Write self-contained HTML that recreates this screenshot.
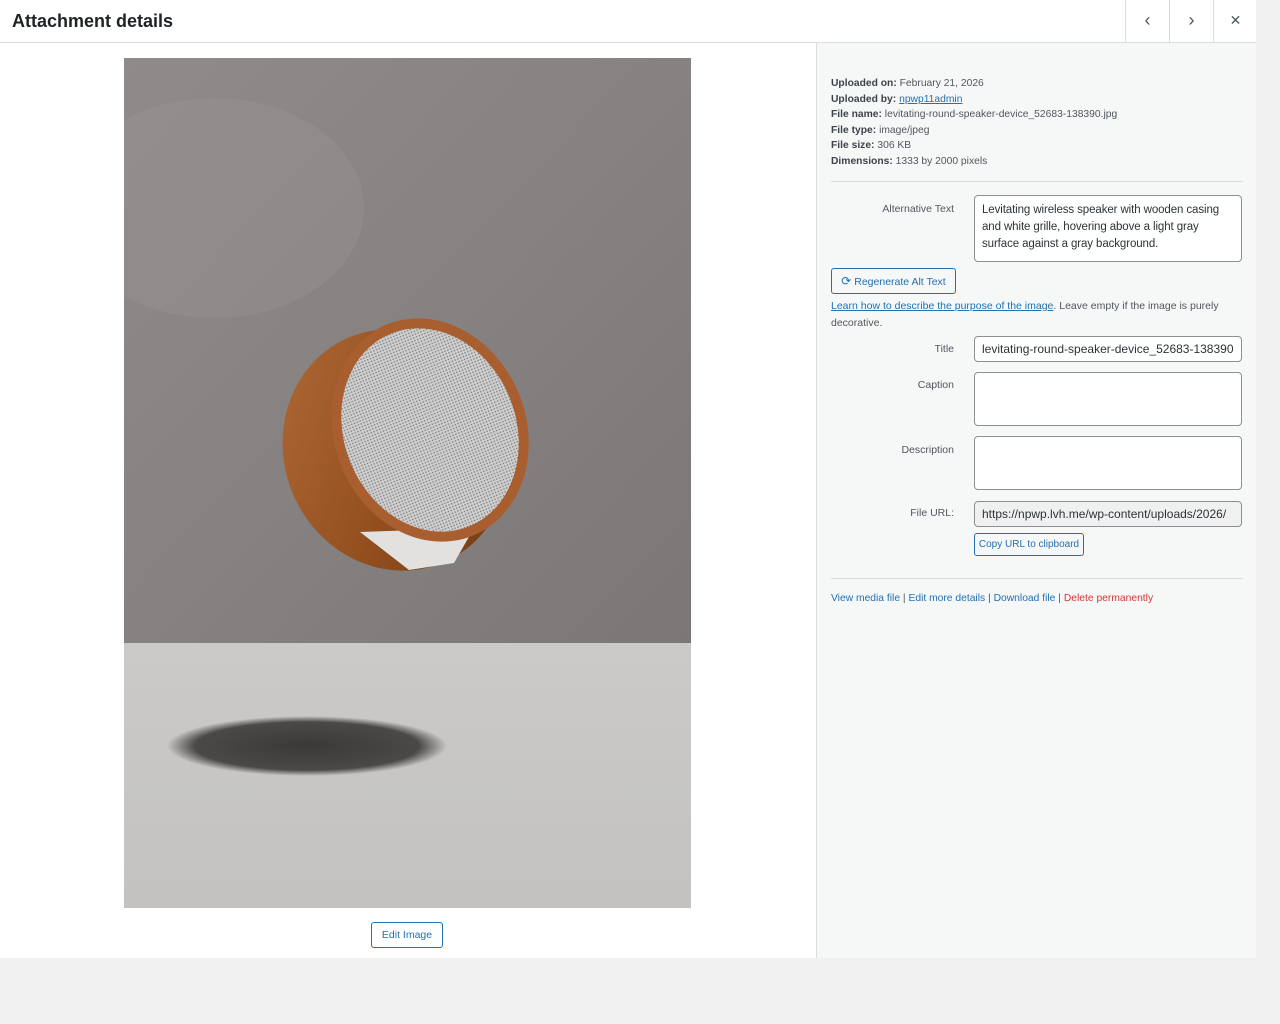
<!DOCTYPE html>
<html><head><meta charset="utf-8"><style>
*{box-sizing:border-box;margin:0;padding:0}
body{width:1280px;height:1024px;background:#f0f0f1;font-family:"Liberation Sans",sans-serif;color:#3c434a;position:relative;overflow:hidden}
.modal{position:absolute;left:0;top:0;width:1256px;height:958px;background:#fff}
.hdr{position:absolute;left:0;top:0;width:1256px;height:43px;border-bottom:1px solid #dcdcde;background:#fff}
.hdr h1{position:absolute;left:12px;top:11px;font-size:18px;font-weight:600;color:#1d2327}
.nb{position:absolute;top:0;width:44px;height:42px;border-left:1px solid #dcdcde;color:#50575e;font-size:18px;text-align:center;line-height:40px}
.side{position:absolute;left:816px;top:43px;width:440px;height:915px;background:#f6f7f7;border-left:1px solid #dcdcde}
.meta{position:absolute;left:14px;top:33px;font-size:10.3px;line-height:15.6px;color:#50575e}
.meta b{color:#3c434a}
a{color:#2271b1}
.hr{position:absolute;left:14px;width:412px;height:1px;background:#dcdcde}
.lbl{position:absolute;right:302px;font-size:10.5px;color:#50575e;text-align:right}
.fld{position:absolute;left:157px;width:268px;background:#fff;border:1px solid #8c8f94;border-radius:4px;font-size:12px;color:#2c3338;padding:6px 7px;line-height:17px;white-space:nowrap;overflow:hidden}
.btn{position:absolute;border:1px solid #2271b1;border-radius:3px;color:#2271b1;font-size:10.5px;background:#f6f7f7;text-align:center}
</style></head><body>
<div class="modal">
<div class="hdr"><h1>Attachment details</h1>
<div class="nb" style="left:1125px">&#8249;</div>
<div class="nb" style="left:1169px">&#8250;</div>
<div class="nb" style="left:1213px;font-size:14px">&#10005;</div>
</div>
<svg style="position:absolute;left:124px;top:58px" width="567" height="850" viewBox="0 0 567 850">
<defs>
<linearGradient id="wall" x1="0" y1="0" x2="1" y2="1"><stop offset="0" stop-color="#8f8b8a"/><stop offset=".5" stop-color="#868281"/><stop offset="1" stop-color="#7b7776"/></linearGradient>
<linearGradient id="floor" x1="0" y1="0" x2="0" y2="1"><stop offset="0" stop-color="#cbcac8"/><stop offset="1" stop-color="#c3c2c0"/></linearGradient>
<linearGradient id="wood" x1="0" y1="0" x2="1" y2="1"><stop offset="0" stop-color="#b06a38"/><stop offset=".5" stop-color="#94501f"/><stop offset="1" stop-color="#6e3814"/></linearGradient>
<pattern id="mesh" width="3" height="3" patternUnits="userSpaceOnUse"><rect width="3" height="3" fill="#cfcfcf"/><circle cx="1.5" cy="1.5" r=".8" fill="#7a7a7a"/></pattern>
<radialGradient id="sh"><stop offset="0" stop-color="#3a3938"/><stop offset=".8" stop-color="#4a4948"/><stop offset="1" stop-color="#4a4948" stop-opacity="0"/></radialGradient>
</defs>
<rect width="567" height="588" fill="url(#wall)"/>
<ellipse cx="90" cy="150" rx="150" ry="110" fill="#9a9695" opacity=".35"/>
<rect y="585" width="567" height="265" fill="url(#floor)"/>
<ellipse cx="183" cy="688" rx="140" ry="30" fill="url(#sh)"/>
<ellipse cx="272" cy="392" rx="112" ry="122" fill="url(#wood)" transform="rotate(-22 272 392)"/>
<polygon points="236,474 350,470 330,505 285,512" fill="#e2e1df"/>
<ellipse cx="306" cy="372" rx="96" ry="114" fill="#a85e2e" transform="rotate(-22 306 372)"/>
<ellipse cx="306" cy="372" rx="86" ry="104" fill="url(#mesh)" transform="rotate(-22 306 372)"/>
</svg>
<div class="btn" style="left:371px;top:922px;width:72px;height:26px;line-height:24px;background:#fff">Edit Image</div>
<div class="side">
<div class="meta"><b>Uploaded on:</b> February 21, 2026<br><b>Uploaded by:</b> <a href="#">npwp11admin</a><br><b>File name:</b> levitating-round-speaker-device_52683-138390.jpg<br><b>File type:</b> image/jpeg<br><b>File size:</b> 306 KB<br><b>Dimensions:</b> 1333 by 2000 pixels</div>
<div class="hr" style="top:138px"></div>
<div class="lbl" style="top:160px">Alternative Text</div>
<div class="fld" style="top:152px;height:67px;white-space:normal;line-height:17px;font-size:11.5px;letter-spacing:-0.1px">Levitating wireless speaker with wooden casing and white grille, hovering above a light gray surface against a gray background.</div>
<div class="btn" style="left:14px;top:225px;width:125px;height:26px;line-height:24px"><span style="font-size:12px">&#10227;</span> Regenerate Alt Text</div>
<div style="position:absolute;left:14px;top:255px;width:400px;font-size:10.5px;line-height:17px;color:#50575e"><a href="#">Learn how to describe the purpose of the image</a>. Leave empty if the image is purely decorative.</div>
<div class="lbl" style="top:300px">Title</div>
<div class="fld" style="top:293px;height:26px;padding-top:4px">levitating-round-speaker-device_52683-138390</div>
<div class="lbl" style="top:336px">Caption</div>
<div class="fld" style="top:329px;height:54px"></div>
<div class="lbl" style="top:401px">Description</div>
<div class="fld" style="top:393px;height:54px"></div>
<div class="lbl" style="top:464px">File URL:</div>
<div class="fld" style="top:458px;height:26px;padding-top:4px;background:#f0f0f1">https://npwp.lvh.me/wp-content/uploads/2026/</div>
<div class="btn" style="left:157px;top:490px;width:110px;height:23px;line-height:21px;font-size:10px;background:#f6f7f7">Copy URL to clipboard</div>
<div class="hr" style="top:535px"></div>
<div style="position:absolute;left:14px;top:550px;font-size:10.3px;color:#50575e"><a href="#" style="text-decoration:none">View media file</a> | <a href="#" style="text-decoration:none">Edit more details</a> | <a href="#" style="text-decoration:none">Download file</a> | <a href="#" style="text-decoration:none;color:#d63638">Delete permanently</a></div>
</div>
</div>
</body></html>
